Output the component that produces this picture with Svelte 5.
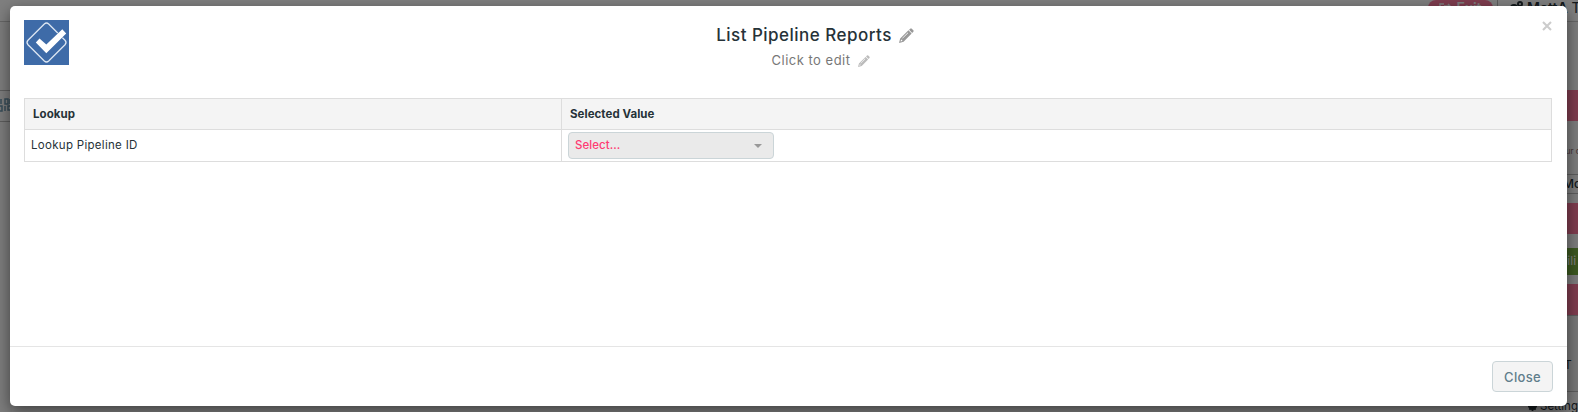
<script>
  const rows = [{ lookup: 'Lookup Pipeline ID', value: 'Select...' }];
</script>

{#snippet pencilIcon(size)}
  <svg class="pencil" width={size} height={size} viewBox="0 0 14 14" aria-hidden="true">
    <path fill="currentColor" fill-rule="evenodd" d="M9.4 1.7 10.5.6Q11.2 0 11.9.6L13.4 2.1Q14 2.8 13.4 3.5L12.3 4.6ZM8.8 2.2 11.8 5.2 4.3 12.9 0 14 1.1 9.9ZM1.9 11 1.4 12.6 3 12.1 3 11ZM8.2 4.2 2.9 9.5 3.3 9.9 8.6 4.6Z" />
  </svg>
{/snippet}

<div class="screen">
  <div class="page">
    <div class="topbar">
      <span class="exit">
        <svg width="12" height="12" viewBox="0 0 12 12"><path d="M5 2H1v5l5 3V7M5 4h6M9 2l2 2-2 2" fill="none" stroke="currentColor" stroke-width="1.5" /></svg>
        Exit
      </span>
      <span class="divider"></span>
      <svg class="gears" width="14" height="12" viewBox="0 0 14 12"><circle cx="5" cy="7" r="3" /><circle cx="11" cy="3" r="2" /><circle cx="11" cy="9" r="1.7" /></svg>
      <span class="user"><b>MattA</b> T</span>
    </div>
    <div class="body">
      <div class="rail">
        <div class="tool">
          <svg width="11" height="14" viewBox="0 0 11 14"><path d="M1 1v5M5 1h3v5H5zM10 1v5M0 8h2v5H0M5 8v5M8 8h3v4H8z" /></svg>
        </div>
      </div>
      <div class="side">
        <div class="block"></div>
        <div class="note">our c</div>
        <div class="name">Mo</div>
        <div class="block second"></div>
        <div class="block green">bili</div>
        <div class="block third"></div>
        <div class="tab">T</div>
        <div class="settings">
          <svg width="9" height="9" viewBox="0 0 10 10"><circle cx="5" cy="5" r="3" /><path d="M5 0v10M0 5h10M1.5 1.5l7 7M8.5 1.5l-7 7" /></svg>
          Setting
        </div>
      </div>
    </div>
  </div>

  <div class="backdrop">
    <div class="modal" role="dialog" aria-label="List Pipeline Reports">
      <header>
        <svg class="logo" width="45" height="45" viewBox="0 0 45 45" aria-hidden="true">
          <rect width="45" height="45" fill="#3e6ba8" />
          <path d="M20.3 4Q22.5 2 24.7 4L41 20.3Q43 22.5 41 24.7L24.7 41Q22.5 43 20.3 41L4 24.7Q2 22.5 4 20.3Z" fill="none" stroke="#dce6f2" stroke-width="1.3" />
          <path d="M11.8 22.5 15.5 18.6 22.3 24.5 38.3 9.3 42.2 13.4 22.3 33.3Z" fill="#fff" stroke="#3e6ba8" stroke-width="1" paint-order="stroke" />
        </svg>
        <div class="heading">
          <h4>List Pipeline Reports {@render pencilIcon(15)}</h4>
          <p>Click to edit {@render pencilIcon(12)}</p>
        </div>
        <button class="dismiss" aria-label="Dismiss"><svg width="10" height="10" viewBox="0 0 10 10"><path d="M1 1l8 8M9 1l-8 8" /></svg></button>
      </header>

      <main>
        <div class="table">
          <div class="row head"><div>Lookup</div><div>Selected Value</div></div>
          {#each rows as row}
            <div class="row">
              <div>{row.lookup}</div>
              <div><button class="select"><span>{row.value}</span><i></i></button></div>
            </div>
          {/each}
        </div>
      </main>

      <footer><button class="close">Close</button></footer>
    </div>
  </div>
</div>

<style>
  :global(body) { overflow: hidden; }
  .screen { display: grid; width: 1578px; height: 412px; overflow: hidden; font-family: Inter, sans-serif; color: #263238; }
  .screen * { box-sizing: border-box; }
  .page, .backdrop { grid-area: 1 / 1; min-width: 0; height: 412px; overflow: hidden; }
  button { font: inherit; margin: 0; padding: 0; }

  .page { display: flex; flex-direction: column; background: #fff; }
  .topbar { display: flex; flex: none; height: 22px; padding-left: 1428px; border-bottom: 1px solid #ccc; font-size: 14px; line-height: 16px; white-space: nowrap; }
  .exit { display: flex; gap: 5px; width: 65px; height: 17px; justify-content: center; background: #ff7a9f; color: #fff; border-radius: 8px; font-weight: 600; flex: none; }
  .exit svg { margin-top: 2px; }
  .divider { width: 1px; height: 22px; margin: 0 11px 0 4px; background: #bbb; flex: none; }
  .gears { flex: none; fill: none; stroke: #263238; stroke-width: 2; margin: 1px 4px 0 0; }
  .user { letter-spacing: 0; flex: none; }
  .user b { font-weight: 600; }
  .body { display: flex; justify-content: space-between; flex: 1; min-height: 0; }
  .rail { width: 12px; padding-top: 68px; background: #fafafa; }
  .tool { height: 32px; padding-top: 7px; border: solid #bbb; border-width: 1px 0; overflow: hidden; }
  .tool svg { display: block; fill: none; stroke: #6e98b0; stroke-width: 1.5; }
  .side { width: 50px; padding-top: 68px; display: flex; flex-direction: column; white-space: nowrap; background: #fafafa; }
  .block { height: 31px; flex: none; background: #ff7a9f; }
  .note { height: 53px; padding: 24px 0 0 33px; font-size: 8px; line-height: 12px; color: #8b6868; flex: none; }
  .name { height: 20px; padding-left: 35px; border: solid #bbb; border-width: 1px 0; font-size: 12px; line-height: 18px; font-weight: 500; flex: none; }
  .second { margin-top: 9px; }
  .green { height: 27px; margin-top: 14px; padding-left: 32px; background: #78b040; color: #fff; font-size: 12px; line-height: 26px; }
  .third { margin-top: 9px; }
  .tab { height: 77px; flex: none; padding: 43px 0 0 36px; font-size: 12px; line-height: 12px; border: solid #bbb; border-width: 1px 0; background: #f0f0f0; }
  .settings { display: flex; gap: 3px; padding-top: 7px; align-items: center; font-size: 11.5px; line-height: 14px; }
  .settings svg { flex: none; fill: none; stroke: #263238; stroke-width: 2; }

  .backdrop { padding: 6px 11px 6px 10px; background: rgba(0, 0, 0, .5); }
  .modal { display: flex; flex-direction: column; height: 400px; background: #fff; border-radius: 5px; box-shadow: 0 5px 15px rgba(0, 0, 0, .5); }
  header { display: grid; grid-template-columns: 45px 1fr 45px; padding: 14px 14px 0; height: 92px; align-items: start; }
  .heading { display: flex; flex-direction: column; align-items: center; padding: 4px 0 0 64px; }
  h4, p { display: flex; align-items: center; margin: 0; white-space: nowrap; }
  h4 { gap: 7px; margin-right: 11px; font-size: 17px; line-height: 23px; font-weight: 500; color: #263238; letter-spacing: .48px; }
  p { gap: 7px; margin-top: 3px; font-size: 13px; line-height: 21px; color: #777; letter-spacing: .5px; }
  h4 .pencil { color: #999; }
  p .pencil { color: #bbb; }
  .dismiss { display: flex; justify-content: flex-end; padding: 1px 1px 0 0; border: 0; background: none; }
  .dismiss path { stroke: #ccc; stroke-width: 2.1; }

  main { flex: 1; padding: 0 15px 0 14px; }
  .table { border: 1px solid #ddd; font-size: 11.5px; }
  .row { display: grid; grid-template-columns: 536px 1fr; height: 31px; line-height: 31px; }
  .row > div { padding-left: 6px; letter-spacing: .3px; }
  .row > div + div { border-left: 1px solid #ddd; }
  .head { height: 31px; background: #f4f4f4; border-bottom: 1px solid #ddd; font-weight: 700; }
  .row.head > div { padding-left: 8px; letter-spacing: .05px; }
  .select { display: flex; align-items: center; justify-content: space-between; width: 206px; height: 27px; margin-top: 2px; padding: 0 11px 0 6px; border: 1px solid #cbd5d8; border-radius: 4px; background: #eaeaea; color: #ff3b73; font-size: 11.5px; font-weight: 500; letter-spacing: .05px; }
  .select span { line-height: 24px; padding-bottom: 1px; }
  .select i { border: solid transparent; border-width: 4px 4px 0; border-top-color: #999; }
  footer { display: flex; justify-content: flex-end; height: 60px; padding: 14px; border-top: 1px solid #e5e5e5; }
  .close { width: 61px; height: 31px; border: 1px solid #cbd5d8; border-radius: 4px; background: #f4f4f4; color: #607d8b; font-size: 13px; font-weight: 500; letter-spacing: .3px; }
</style>
